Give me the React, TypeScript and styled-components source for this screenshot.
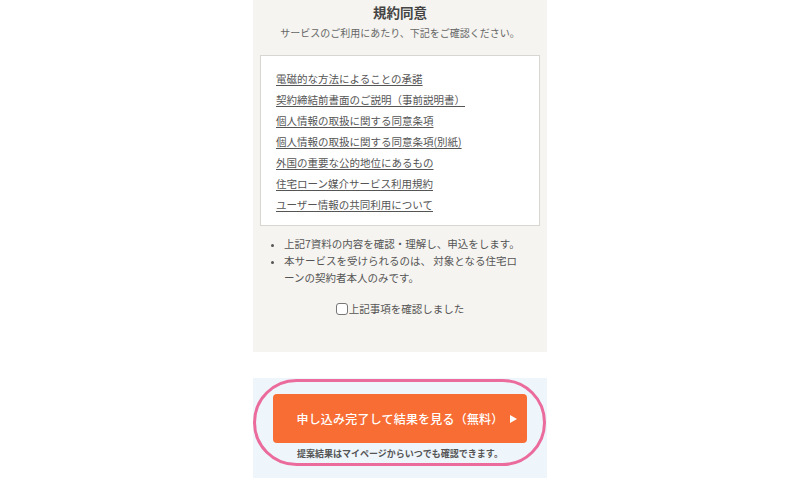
import React from "react";
import styled, { createGlobalStyle } from "styled-components";

const Global = createGlobalStyle`
  html, body { margin: 0; padding: 0; background: #ffffff; }
  body { font-family: "Noto Sans CJK JP", "Noto Sans", sans-serif; color: #555; }
`;

const Page = styled.div`
  width: 800px;
  display: flex;
  flex-direction: column;
  align-items: center;
`;

const Column = styled.div`
  width: 294px;
  display: flex;
  flex-direction: column;
`;

const Panel = styled.section`
  background: #f5f4f0;
  padding: 0 7px 35px;
  display: flex;
  flex-direction: column;
`;

const Title = styled.h2`
  margin: 0;
  font-size: 13.5px;
  line-height: 25px;
  font-weight: 700;
  color: #444;
  text-align: center;
`;

const Lead = styled.p`
  margin: 0;
  font-size: 10px;
  line-height: 16px;
  color: #666;
  text-align: center;
`;

const DocBox = styled.div`
  margin-top: 14px;
  background: #fff;
  border: 1px solid #d8d6d2;
  padding: 12px 15px 10px;
  display: flex;
  flex-direction: column;
`;

const DocLink = styled.a`
  font-size: 10.5px;
  line-height: 21px;
  color: #555;
  text-decoration: underline;
  text-underline-offset: 2px;
  align-self: flex-start;
`;

const Notes = styled.ul`
  margin: 9px 0 0;
  padding: 0 16px 0 24px;
  list-style: disc;
`;

const Note = styled.li`
  font-size: 10.5px;
  line-height: 17px;
  color: #555;
  &::marker { font-size: 9px; }
`;

const Agree = styled.label`
  margin-top: 14px;
  display: flex;
  align-items: center;
  justify-content: center;
  font-size: 10.5px;
  line-height: 17px;
  color: #555;
`;

const Check = styled.span`
  width: 10px;
  height: 10px;
  border: 1px solid #777;
  border-radius: 3px;
  background: #fff;
  margin-right: 1px;
`;

const CtaArea = styled.section`
  margin-top: 26px;
  background: #eef6fc;
  padding: 16px 20px 17px;
  position: relative;
  display: flex;
  flex-direction: column;
  align-items: stretch;
`;

const CtaButton = styled.button`
  height: 49px;
  border: none;
  border-radius: 4px;
  background: #f86d34;
  color: #fff;
  font-family: "Noto Sans CJK JP", sans-serif;
  font-size: 12px;
  font-weight: 500;
  display: flex;
  align-items: center;
  justify-content: center;
  position: relative;
  padding: 0;
  letter-spacing: 0.2px;
`;

const Arrow = styled.span`
  position: absolute;
  right: 10px;
  top: 50%;
  transform: translateY(-50%);
  width: 0;
  height: 0;
  border-top: 4.5px solid transparent;
  border-bottom: 4.5px solid transparent;
  border-left: 7px solid #fff;
`;

const Caption = styled.p`
  margin: 4px 0 0;
  font-size: 9px;
  line-height: 14px;
  font-weight: 700;
  color: #555;
  text-align: center;
`;

const Ring = styled.div`
  position: absolute;
  left: 0;
  top: 1px;
  width: 293px;
  height: 87px;
  box-sizing: border-box;
  border: 3px solid #ea6b9c;
  border-radius: 44px;
  pointer-events: none;
`;

const docs = [
  "電磁的な方法によることの承諾",
  "契約締結前書面のご説明（事前説明書）",
  "個人情報の取扱に関する同意条項",
  "個人情報の取扱に関する同意条項(別紙)",
  "外国の重要な公的地位にあるもの",
  "住宅ローン媒介サービス利用規約",
  "ユーザー情報の共同利用について",
];

export default function App() {
  return (
    <Page>
      <Global />
      <Column>
        <Panel>
          <Title>規約同意</Title>
          <Lead>サービスのご利用にあたり、下記をご確認ください。</Lead>
          <DocBox>
            {docs.map((d) => (
              <DocLink key={d}>{d}</DocLink>
            ))}
          </DocBox>
          <Notes>
            <Note>上記7資料の内容を確認・理解し、申込をします。</Note>
            <Note>本サービスを受けられるのは、 対象となる住宅ローンの契約者本人のみです。</Note>
          </Notes>
          <Agree>
            <Check />
            上記事項を確認しました
          </Agree>
        </Panel>
        <CtaArea>
          <CtaButton>
            <span>申し込み完了して結果を見る（無料）</span>
            <Arrow />
          </CtaButton>
          <Caption>提案結果はマイページからいつでも確認できます。</Caption>
          <Ring />
        </CtaArea>
      </Column>
    </Page>
  );
}
